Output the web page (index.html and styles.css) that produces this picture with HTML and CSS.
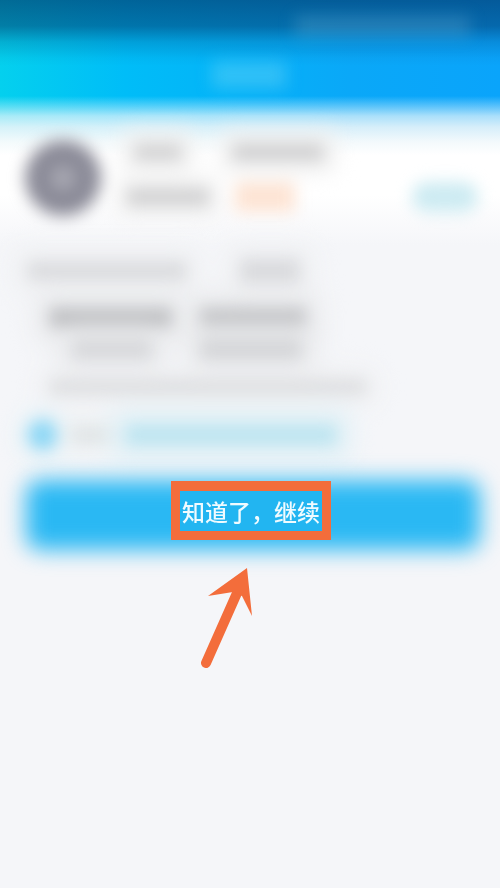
FILE: index.html
```html
<!DOCTYPE html>
<html lang="zh-CN">
<head>
<meta charset="utf-8">
<title>知道了，继续</title>
<link rel="stylesheet" href="styles.css">
</head>
<body>
<main class="screen">
  <header class="topbar">
    <div class="status-row blur"><span class="status-text"></span></div>
    <div class="title-row blur"><span class="title-glow"></span></div>
  </header>
  <section class="profile blur">
    <div class="avatar"><span class="avatar-mark"></span></div>
    <div class="profile-info">
      <div class="line-row title-line"><span class="bar b-a"></span><span class="bar b-b"></span></div>
      <div class="line-row meta-line"><span class="bar b-c"></span><span class="bar b-orange"></span></div>
    </div>
    <span class="pill"></span>
  </section>
  <section class="notes blur">
    <div class="line-row note-1"><span class="bar n1a"></span><span class="bar n1b"></span></div>
    <div class="line-row note-2"><span class="bar n2a"></span><span class="bar n2b"></span></div>
    <div class="line-row note-3"><span class="bar n3a"></span><span class="bar n3b"></span></div>
    <div class="line-row note-4"><span class="bar n4a"></span></div>
    <div class="line-row note-5"><span class="dot"></span><span class="bar n5a"></span><span class="bar n5b"></span></div>
  </section>
  <section class="action">
    <div class="action-bg"></div>
    <div class="callout"><button class="action-label" type="button">知道了，继续</button></div>
  </section>
  <div class="arrow-row">
    <svg class="arrow" width="56" height="106" viewBox="0 0 56 106" aria-hidden="true">
      <path class="arrow-shaft" d="M6 97 L37 27"/>
      <path class="arrow-head" d="M47 2 L8 30 L33 26 L42 30 L52 50 Z"/>
    </svg>
  </div>
</main>
</body>
</html>
```
FILE: styles.css
```css
* { box-sizing: border-box; }
html, body { margin: 0; padding: 0; }
body {
  width: 500px;
  height: 888px;
  overflow: hidden;
  background: #f5f6f9;
  font-family: "Noto Sans CJK SC", "Noto Sans", sans-serif;
}
.screen {
  display: flex;
  flex-direction: column;
  height: 888px;
  overflow: hidden;
  background:
    linear-gradient(to bottom,
      rgba(255,255,255,0) 0, rgba(255,255,255,0) 96px,
      rgba(235,247,252,.35) 106px, rgba(232,246,251,.72) 116px,
      rgba(236,246,250,.9) 127px, rgba(248,251,252,.98) 142px, #ffffff 155px) no-repeat 0 0 / 100% 156px,
    linear-gradient(to bottom,
      rgba(0,45,95,.62) 0, rgba(0,45,95,.5) 26px, rgba(0,45,95,.2) 42px, rgba(0,45,95,.04) 58px, rgba(0,45,95,0) 66px) no-repeat 0 0 / 100% 156px,
    linear-gradient(to right, #04d0ee 0, #00bdf8 25%, #0aa8f8 70%, #0aa4fb 100%) no-repeat 0 0 / 100% 156px,
    linear-gradient(to bottom, #ffffff 0, #ffffff 195px, #f5f6f9 245px);
}
.blur { filter: blur(8px); }

/* Top bar */
.topbar {
  height: 130px;
  flex: none;
  display: flex;
  flex-direction: column;
}
.status-row {
  height: 52px;
  padding: 16px 30px 0 295px;
  display: flex;
}
.status-text {
  width: 175px;
  height: 20px;
  background: rgba(140,200,225,.24);
}
.title-row {
  height: 40px;
  padding: 10px 0 0 212px;
}
.title-glow {
  display: block;
  width: 74px;
  height: 26px;
  background: rgba(110,215,245,.42);
}

/* Profile */
.profile {
  height: 110px;
  flex: none;
  display: flex;
  align-items: center;
  padding: 0 22px 14px 25px;
}
.avatar {
  width: 76px;
  height: 76px;
  flex: none;
  border-radius: 50%;
  background: #8b8b98;
  display: flex;
  align-items: center;
  justify-content: center;
}
.avatar-mark {
  width: 24px;
  height: 24px;
  border-radius: 50%;
  background: #a9a9b3;
}
.profile-info {
  flex: 1;
  display: flex;
  flex-direction: column;
  gap: 22px;
  padding-left: 26px;
}
.line-row { display: flex; align-items: center; }
.bar { display: block; height: 16px; }
.title-line { padding-left: 8px; }
.b-a { width: 46px; background: #d2d2d3; box-shadow: 0 0 16px 12px #efefef; }
.b-b { width: 90px; margin-left: 52px; background: #cfcfd0; box-shadow: 0 0 16px 12px #efefef; }
.b-c { width: 82px; height: 18px; background: #d2d2d3; box-shadow: 0 0 16px 10px #f0f0f0; }
.b-orange { width: 60px; height: 30px; margin-left: 26px; background: #fde4d4; }
.pill {
  width: 66px;
  height: 30px;
  margin-top: 38px;
  border-radius: 15px;
  background: #cdebf2;
}

/* Notes */
.notes {
  height: 238px;
  flex: none;
  display: flex;
  flex-direction: column;
  padding: 24px 0 0 28px;
}
.note-1 { gap: 54px; height: 14px; }
.n1a { width: 158px; height: 18px; background: #d9dadd; box-shadow: 0 0 22px 14px #eff0f2; }
.n1b { width: 60px; height: 24px; background: #d9dadd; box-shadow: 0 0 22px 14px #eff0f2; }
.note-2 { gap: 28px; height: 16px; margin-top: 32px; padding-left: 22px; }
.n2a { width: 122px; height: 20px; background: #b8b9bc; box-shadow: 0 0 22px 14px #e8e9eb; }
.n2b { width: 106px; height: 20px; background: #bbbcbf; box-shadow: 0 0 22px 14px #e8e9eb; }
.note-3 { gap: 48px; height: 16px; margin-top: 16px; padding-left: 44px; }
.n3a { width: 80px; height: 20px; background: #d6d7da; box-shadow: 0 0 22px 14px #e9eaec; }
.n3b { width: 102px; height: 22px; background: #d4d5d8; box-shadow: 0 0 22px 14px #e9eaec; }
.note-4 { height: 14px; margin-top: 22px; padding-left: 22px; }
.n4a { width: 316px; height: 14px; background: #dcdddf; box-shadow: 0 0 22px 10px #eeeff1; }
.note-5 { height: 30px; margin-top: 26px; }
.dot {
  width: 30px;
  height: 30px;
  border-radius: 50%;
  background: #8ad6f5;
  box-shadow: 0 0 18px 10px #e2f1f7;
}
.n5a { width: 38px; height: 16px; margin-left: 14px; background: #dfe3e4; box-shadow: 0 0 16px 10px #edf1f3; }
.n5b { width: 210px; height: 20px; margin-left: 16px; background: #bce4f0; box-shadow: 0 0 20px 14px #dff0f6; }

/* Action button */
.action {
  position: relative;
  height: 70px;
  flex: none;
  margin: 0 20px 0 26px;
  display: flex;
  justify-content: center;
  padding-top: 3px;
}
.action-bg {
  position: absolute;
  inset: 2px 0 -2px;
  border-radius: 14px;
  background: #2ab8f3;
  filter: blur(11px);
}
.callout {
  position: relative;
  width: 160px;
  height: 59px;
  margin-right: 4px;
  border: solid #f36d3b;
  border-width: 10px 9px 9px;
  background: #22b5f1;
  display: flex;
  align-items: center;
  justify-content: center;
  filter: blur(.35px);
}
.action-label {
  padding: 0;
  border: 0;
  background: none;
  color: #f0fbff;
  font: 500 23px/38px "Noto Sans CJK SC", "Noto Sans", sans-serif;
  white-space: nowrap;
}

/* Arrow */
.arrow-row {
  padding: 18px 0 0 200px;
  line-height: 0;
}
.arrow { display: block; filter: blur(.35px); }
.arrow-shaft {
  fill: none;
  stroke: #f36d3b;
  stroke-width: 10;
  stroke-linecap: round;
}
.arrow-head { fill: #f36d3b; }
```
